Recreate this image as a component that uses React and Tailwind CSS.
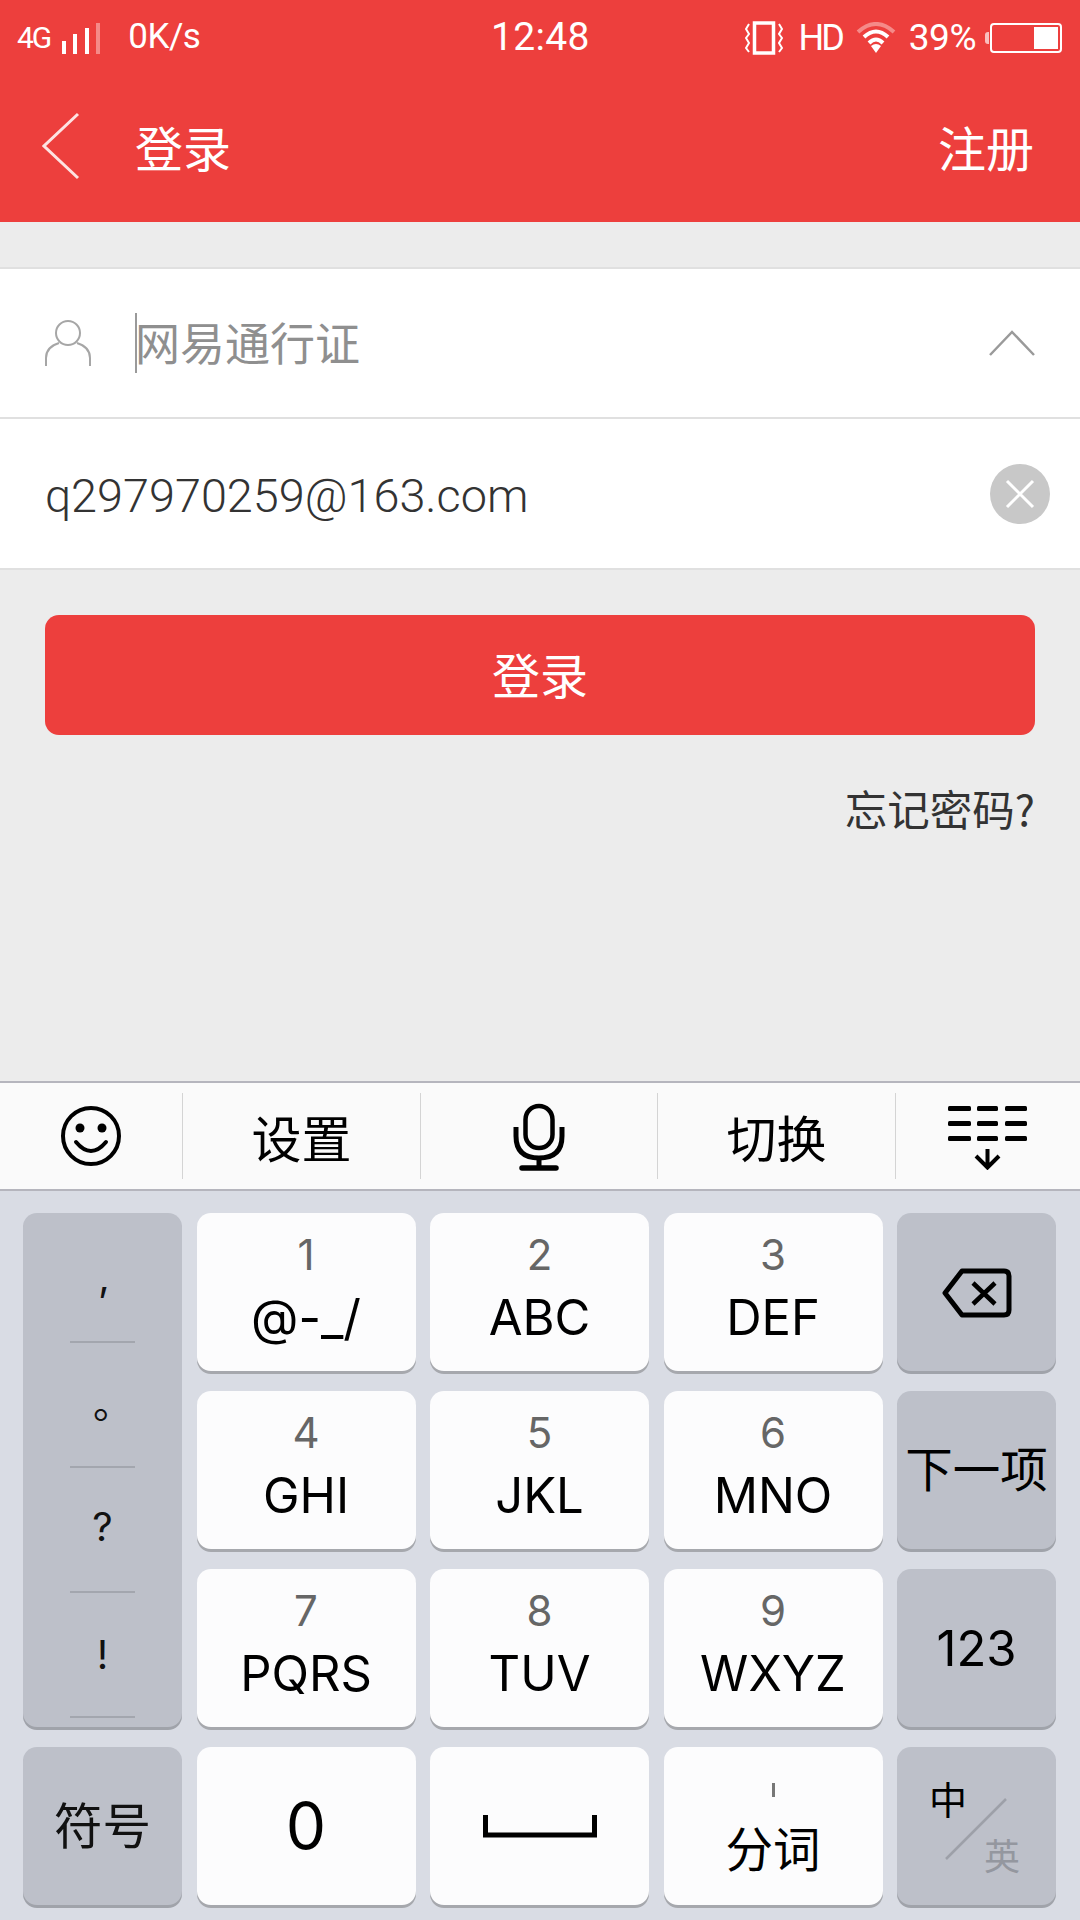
const CJK = '"Noto Sans CJK SC", "Liberation Sans", sans-serif';

function Key({ num, label }) {
  return (
    <div className="flex flex-col items-center rounded-[14px] bg-[#fcfcfd] shadow-[0_3px_0_#a6a8ad]">
      <span className="mt-[18px] h-[48px] text-[42px] leading-[48px] text-[#666]">{num}</span>
      <span className="mt-[9px] h-[60px] text-[49px] leading-[60px] text-black">{label}</span>
    </div>
  );
}

function Gray({ children, className = "" }) {
  return (
    <div className={"relative flex items-center justify-center rounded-[14px] bg-[#bdc0c9] shadow-[0_3px_0_#a0a3aa] " + className}>
      {children}
    </div>
  );
}

function Sym({ ch, shift = "" }) {
  return (
    <div className="flex h-[123px] items-center justify-center">
      <span className={"text-[40px] leading-none text-[#111] " + shift}>{ch}</span>
    </div>
  );
}

function Line() {
  return <div className="mx-auto h-[2px] w-[65px] bg-[#a3a6ae]" />;
}

export default function App() {
  return (
    <div className="flex h-[1920px] w-[1080px] flex-col overflow-hidden bg-[#ececec]" style={{ fontFamily: '"Inter", "Noto Sans CJK SC", sans-serif' }}>
      {/* Header */}
      <div className="h-[222px] shrink-0 bg-[#ed3f3d] text-white">
        <div className="relative flex h-[75px] items-center justify-between pl-[17px] pr-[18px]">
          <div className="flex items-center">
            <span className="text-[30px] tracking-[-2px] [font-family:'Roboto']">4G</span>
            <svg width="42" height="32" viewBox="0 0 42 32" className="ml-[10px] mt-[3px]">
              <rect x="2" y="18" width="4" height="13" fill="#fff" />
              <rect x="13" y="11" width="4" height="20" fill="#fff" />
              <rect x="25" y="5" width="4" height="26" fill="#fff" />
              <rect x="36" y="0" width="4" height="31" fill="#f58a88" />
            </svg>
            <span className="ml-[26px] text-[35px] [font-family:'Roboto'] tracking-[-0.5px]">0K/s</span>
          </div>
          <span className="absolute left-[491px] top-[12px] text-[39px] leading-[50px] [font-family:'Roboto'] tracking-[0.3px]">12:48</span>
          <div className="flex items-center">
            <svg width="38" height="34" viewBox="0 0 38 34" fill="none" stroke="#fff">
              <rect x="9.5" y="2" width="19" height="30" strokeWidth="3.5" />
              <path d="M4 3 l-3 5 l3 5 l-3 4 l3 5 l-3 5 l3 4 M34 3 l3 5 l-3 5 l3 4 l-3 5 l3 5 l-3 4" strokeWidth="2" />
            </svg>
            <span className="ml-[15px] text-[36px] [font-family:'Roboto'] tracking-[-3px]">HD</span>
            <svg width="40" height="32" viewBox="0 0 40 32" fill="none" className="ml-[14px]">
              <path d="M2 10 Q20 -6 38 10" stroke="#f58a88" strokeWidth="4" />
              <path d="M8 15 Q20 4 32 15" stroke="#fff" strokeWidth="4" />
              <path d="M13 21 Q20 14 27 21" stroke="#fff" strokeWidth="4" />
              <path d="M15 24 Q20 20 25 24 L20 31 Z" fill="#fff" />
            </svg>
            <span className="ml-[13px] text-[37px] [font-family:'Roboto'] tracking-[-0.5px]">39%</span>
            <div className="ml-[9px] mr-[1px] h-[12px] w-[4px] rounded-l-[3px] bg-[#f9c0bf]" />
            <div className="flex h-[30px] w-[72px] items-center justify-end rounded-[4px] border-2 border-[#fff] p-[2px]">
              <div className="h-[22px] w-[24px] bg-white" />
            </div>
          </div>
        </div>
        <div className="flex h-[147px] items-center justify-between pl-[42px] pr-[46px] pb-[6px]" style={{ fontFamily: CJK }}>
          <div className="flex items-center">
            <svg width="38" height="68" viewBox="0 0 38 68" fill="none" stroke="#fde3e2" strokeWidth="3">
              <path d="M36 2 L2 34 L36 66" />
            </svg>
            <span className="ml-[55px] text-[48px] leading-none">登录</span>
          </div>
          <span className="text-[48px] leading-none">注册</span>
        </div>
      </div>

      {/* Form */}
      <div className="mt-[45px] bg-white" style={{ fontFamily: CJK }}>
        <div className="flex h-[152px] items-center border-y-2 border-[#e0e0e0] pl-[45px] pr-[45px]">
          <svg width="46" height="46" viewBox="0 0 46 46" fill="none" stroke="#a6a6a6" strokeWidth="2">
            <circle cx="23" cy="13" r="12" />
            <path d="M1 46 V38 Q1 27 14 23 M45 46 V38 Q45 27 32 23" />
          </svg>
          <div className="ml-[44px] h-[60px] w-[2px] bg-[#9a9a9a]" />
          <span className="-ml-[2px] pb-[4px] text-[45px] leading-none text-[#8f8f8f]">网易通行证</span>
          <svg width="46" height="26" viewBox="0 0 46 26" fill="none" stroke="#9a9a9a" strokeWidth="2.5" className="ml-auto">
            <path d="M1 25 L23 2 L45 25" />
          </svg>
        </div>
        <div className="flex h-[151px] items-center border-b-2 border-[#e0e0e0] pl-[45px] pr-[30px]">
          <span className="pt-[5px] text-[46.8px] font-light leading-none text-[#333] [font-family:'Roboto']">q297970259@163.com</span>
          <div className="ml-auto flex h-[60px] w-[60px] items-center justify-center rounded-full bg-[#c8c8c8]">
            <svg width="30" height="30" viewBox="0 0 30 30" stroke="#fff" strokeWidth="3">
              <path d="M2 2 L28 28 M28 2 L2 28" />
            </svg>
          </div>
        </div>
      </div>

      {/* Button */}
      <div className="mx-[45px] mt-[45px] flex h-[120px] items-center justify-center rounded-[14px] bg-[#ed3f3d] pb-[4px]" style={{ fontFamily: CJK }}>
        <span className="text-[48px] leading-none text-[#fff]">登录</span>
      </div>
      <div className="mr-[45px] mt-[45px] text-right text-[42.5px] leading-[56px] text-[#333]" style={{ fontFamily: CJK }}>忘记密码?</div>

      <div className="flex-1" />

      {/* Toolbar */}
      <div className="flex h-[110px] shrink-0 items-center border-y-2 border-[#b5b5bd] bg-[#fafafa] text-black" style={{ fontFamily: CJK }}>
        <div className="flex h-[86px] w-[183px] items-center justify-center border-r border-[#d4d4d4]">
          <svg width="62" height="62" viewBox="0 0 62 62" fill="none" stroke="#000" strokeWidth="4">
            <circle cx="31" cy="31" r="28" />
            <circle cx="20" cy="23" r="4.5" fill="#000" stroke="none" />
            <circle cx="42" cy="23" r="4.5" fill="#000" stroke="none" />
            <path d="M16 37 Q31 55 46 37" strokeLinecap="round" />
          </svg>
        </div>
        <div className="flex h-[86px] w-[238px] items-center justify-center border-r border-[#d4d4d4] text-[50px] leading-none">设置</div>
        <div className="flex h-[86px] w-[237px] items-center justify-center border-r border-[#d4d4d4]">
          <svg width="52" height="68" viewBox="0 0 52 68" fill="none" stroke="#000" strokeWidth="5" className="mt-[2px]">
            <rect x="12.5" y="3" width="27" height="42" rx="13.5" strokeWidth="4.5" />
            <path d="M3 24 V33 Q3 55 26 55 Q49 55 49 33 V24" />
            <path d="M26 55 V64" />
            <path d="M9 65 H43" strokeWidth="5.5" strokeLinecap="round" />
          </svg>
        </div>
        <div className="flex h-[86px] w-[238px] items-center justify-center border-r border-[#d4d4d4] text-[50px] leading-none">切换</div>
        <div className="flex h-[86px] flex-1 items-center justify-center">
          <svg width="80" height="64" viewBox="0 0 80 64" fill="#000" className="mt-[3px]">
            <rect x="0" y="0" width="23" height="5" rx="1.5" />
            <rect x="29" y="0" width="21" height="5" rx="1.5" />
            <rect x="57" y="0" width="22" height="5" rx="1.5" />
            <rect x="0" y="15" width="23" height="5" rx="1.5" />
            <rect x="29" y="15" width="21" height="5" rx="1.5" />
            <rect x="57" y="15" width="22" height="5" rx="1.5" />
            <rect x="0" y="30" width="23" height="5" rx="1.5" />
            <rect x="29" y="30" width="21" height="5" rx="1.5" />
            <rect x="57" y="30" width="22" height="5" rx="1.5" />
            <path d="M39.5 43 V61 M28 50 L39.5 61.5 L51 50" fill="none" stroke="#000" strokeWidth="4" />
          </svg>
        </div>
      </div>

      {/* Keyboard */}
      <div className="h-[729px] shrink-0 bg-[#d9dce4] pl-[23px] pr-[24px] pt-[22px]">
        <div className="grid grid-cols-[159px_219px_219px_219px_159px] grid-rows-[158px_158px_158px_158px] gap-x-[14.5px] gap-y-[20px]">
          <Gray className="row-span-3 flex-col justify-start pt-[5px]">
            <div className="w-full">
              <Sym ch="," shift="pb-[6px] pl-[3px]" />
              <Line />
              <Sym ch="。" shift="pb-[2px] pl-[21px]" />
              <Line />
              <Sym ch="?" shift="pb-[5px]" />
              <Line />
              <Sym ch="!" />
              <Line />
            </div>
          </Gray>
          <Key num="1" label="@-_/" />
          <Key num="2" label="ABC" />
          <Key num="3" label="DEF" />
          <Gray>
            <svg width="70" height="50" viewBox="0 0 70 50" fill="none" stroke="#000" strokeWidth="5" strokeLinejoin="round" className="mt-[1px]">
              <path d="M20 3 H62 Q67 3 67 8 V42 Q67 47 62 47 H20 L3 25 Z" />
              <path d="M31 15 L53 36 M53 15 L31 36" strokeWidth="4.5" />
            </svg>
          </Gray>
          <Key num="4" label="GHI" />
          <Key num="5" label="JKL" />
          <Key num="6" label="MNO" />
          <Gray>
            <span className="pb-[6px] text-[47.5px] leading-none text-black" style={{ fontFamily: CJK }}>下一项</span>
          </Gray>
          <Key num="7" label="PQRS" />
          <Key num="8" label="TUV" />
          <Key num="9" label="WXYZ" />
          <Gray>
            <span className="text-[49px] leading-none text-black">123</span>
          </Gray>
          <Gray>
            <span className="pb-[6px] text-[48.5px] leading-none text-[#111]" style={{ fontFamily: CJK }}>符号</span>
          </Gray>
          <div className="flex items-center justify-center rounded-[14px] bg-[#fcfcfd] shadow-[0_3px_0_#a6a8ad]">
            <span className="text-[64px] leading-none text-black">0</span>
          </div>
          <div className="flex items-center justify-center rounded-[14px] bg-[#fcfcfd] shadow-[0_3px_0_#a6a8ad]">
            <svg width="114" height="24" viewBox="0 0 114 24" fill="none" stroke="#000" strokeWidth="5">
              <path d="M2.5 1 V21 H111.5 V1" />
            </svg>
          </div>
          <div className="flex flex-col items-center rounded-[14px] bg-[#fcfcfd] shadow-[0_3px_0_#a6a8ad]">
            <span className="mt-[36px] h-[14px] w-[3px] bg-[#777]" />
            <span className="mt-[26px] text-[47.5px] leading-none text-black" style={{ fontFamily: CJK }}>分词</span>
          </div>
          <Gray>
            <span className="absolute left-[32px] top-[32px] text-[38px] leading-none text-black" style={{ fontFamily: CJK }}>中</span>
            <svg width="64" height="64" viewBox="0 0 64 64" className="absolute left-[47px] top-[50px]" stroke="#9da0a8" strokeWidth="2.5">
              <path d="M2 62 L62 2" />
            </svg>
            <span className="absolute left-[87px] top-[89px] text-[36px] leading-none text-[#94979f]" style={{ fontFamily: CJK }}>英</span>
          </Gray>
        </div>
      </div>
    </div>
  );
}
